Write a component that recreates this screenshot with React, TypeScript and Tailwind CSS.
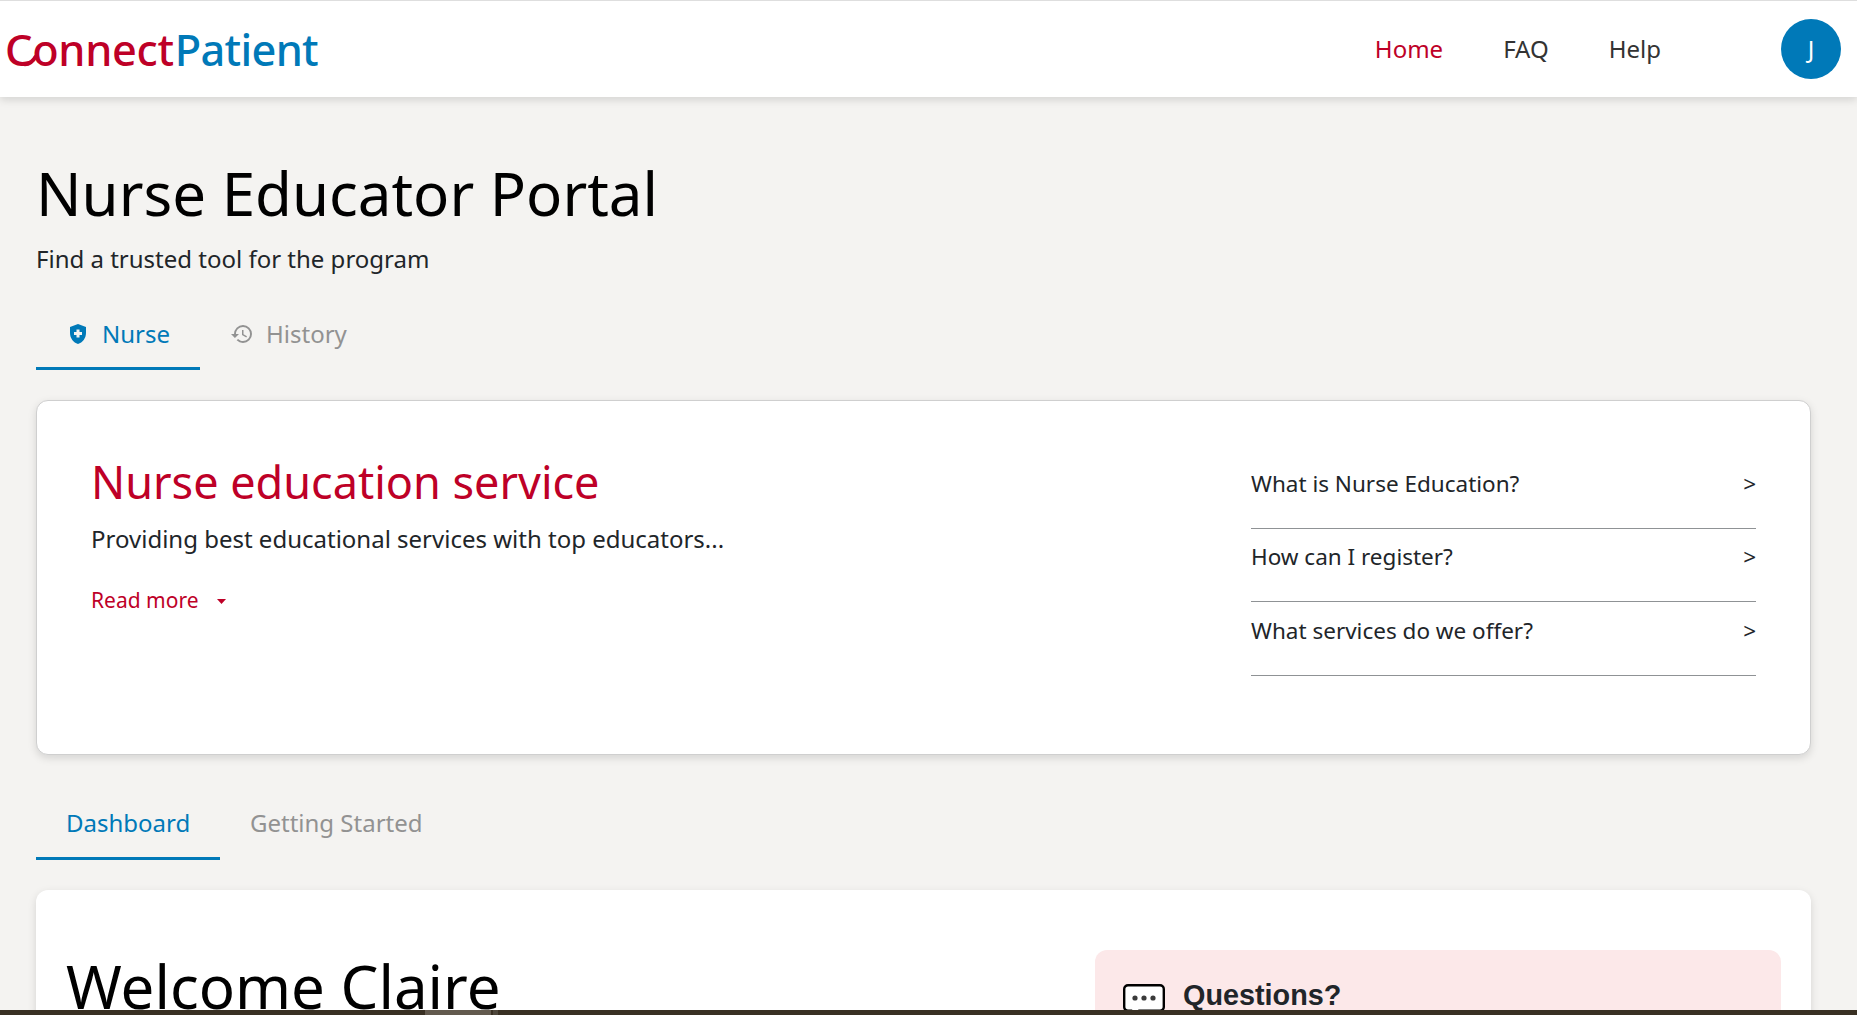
import React from "react";
import { MdHealthAndSafety, MdHistory } from "react-icons/md";

const questions = ["What is Nurse Education?", "How can I register?", "What services do we offer?"];

function Header() {
  return (
    <header className="relative flex h-[97px] shrink-0 items-center justify-between border-t border-[#dedede] bg-white pr-4 shadow-[0_3px_8px_rgba(0,0,0,0.13)]">
      <div className="relative ml-[5px] pt-[2px] text-[43.3px] leading-[60px] font-medium whitespace-nowrap">
        <span className="inline-block tracking-[-0.3px] text-[#be0027]">Connect</span>
        <span className="ml-px inline-block tracking-[-0.7px] text-[#0079b8]">Patient</span>
        {/* stroke that joins the C to the o */}
        <svg className="absolute top-[35px] left-[18px] h-[14px] w-[18px]" viewBox="0 0 18 14" fill="none" stroke="#be0027" strokeWidth="3.8">
          <path d="M1 11.2C6 11.6 10 8.5 13 3" />
        </svg>
      </div>
      <nav className="flex items-center text-2xl leading-9 text-[#333]">
        <a className="mr-[60px] text-[#be0027]">Home</a>
        <a className="mr-[60px]">FAQ</a>
        <a className="mr-[120px]">Help</a>
        <div className="flex size-[60px] items-center justify-center rounded-full bg-[#0079b8] text-white">J</div>
      </nav>
    </header>
  );
}

export default function App() {
  return (
    <div className="flex h-[1015px] w-[1857px] flex-col overflow-hidden bg-[#f4f3f1] font-['Noto_Sans',sans-serif] text-[#212529]">
      <Header />
      <main className="flex min-h-0 flex-1 flex-col overflow-hidden pr-[46px] pl-9">
        <h1 className="mt-[60px] shrink-0 text-[60px] leading-[72px] text-black">Nurse Educator Portal</h1>
        <p className="mt-3 shrink-0 text-2xl leading-9">Find a trusted tool for the program</p>

        <div className="mt-[39px] flex h-[54px] shrink-0 text-2xl leading-9">
          <div className="flex w-[164px] gap-3 border-b-3 border-[#0079b8] pl-[30px] text-[#0079b8]">
            <MdHealthAndSafety className="mt-[6px] size-6" />
            <span>Nurse</span>
          </div>
          <div className="flex gap-3 pl-[30px] text-[#929292]">
            <MdHistory className="mt-[6px] size-6" />
            <span>History</span>
          </div>
        </div>

        <section className="mt-[30px] flex h-[355px] shrink-0 justify-between rounded-xl border border-[#cfcfcf] bg-white px-[54px] pt-[54px] shadow-[0_3px_8px_rgba(0,0,0,0.13)]">
          <div>
            <h2 className="text-[45px] leading-[54px] text-[#be0027]">Nurse education service</h2>
            <p className="mt-3 text-2xl leading-9">Providing best educational services with top educators...</p>
            <div className="mt-[27px] flex items-center text-[21px] leading-8 text-[#be0027]">
              Read more
              <svg className="mt-[3px] ml-[18px] h-[5px] w-[9px]" viewBox="0 0 9 5" fill="currentColor"><path d="M0 0h9L4.5 5z" /></svg>
            </div>
          </div>
          <div className="w-[505px] text-[22.5px] leading-[34px]">
            {questions.map((q) => (
              <div key={q} className="flex h-[73.5px] justify-between border-b border-[#8f9295] pt-[11.5px]">
                <span>{q}</span>
                <span>&gt;</span>
              </div>
            ))}
          </div>
        </section>

        <div className="mt-[50px] flex h-[55px] shrink-0 text-2xl leading-9">
          <div className="w-[184px] border-b-3 border-[#0079b8] pl-[30px] text-[#0079b8]">Dashboard</div>
          <div className="pl-[30px] text-[#929292]">Getting Started</div>
        </div>

        <section className="mt-[30px] flex h-[360px] shrink-0 justify-between rounded-xl bg-white px-[30px] pt-[60px] shadow-[0_3px_8px_rgba(0,0,0,0.13)]">
          <h2 className="text-[60px] leading-[72px] text-black">Welcome Claire</h2>
          <aside className="flex w-[686px] rounded-xl bg-[#fce8e9] pt-[34px] pl-7">
            <svg className="h-[40px] w-[42px]" viewBox="0 0 42 40">
              <path d="M5 1.2h32a3.8 3.8 0 0 1 3.8 3.8v18a3.8 3.8 0 0 1-3.8 3.8H16l-8 8v-8H5a3.8 3.8 0 0 1-3.8-3.8V5A3.8 3.8 0 0 1 5 1.2z" fill="#fff" stroke="#000" strokeWidth="2.4" />
              <g fill="#3a3a3a"><circle cx="12" cy="14" r="2.6" /><circle cx="21" cy="14" r="2.6" /><circle cx="30" cy="14" r="2.6" /></g>
            </svg>
            <h3 className="-mt-[7px] ml-[18px] font-['Liberation_Sans',sans-serif] text-[28.8px] leading-9 font-bold">Questions?</h3>
          </aside>
        </section>
      </main>
      <footer className="flex h-[5px] shrink-0 bg-[#393023]">
        <div className="ml-[425px] w-[66px] bg-[#635a4e]" />
        <div className="ml-[2px] w-[5px] bg-[#4e473b]" />
      </footer>
    </div>
  );
}
